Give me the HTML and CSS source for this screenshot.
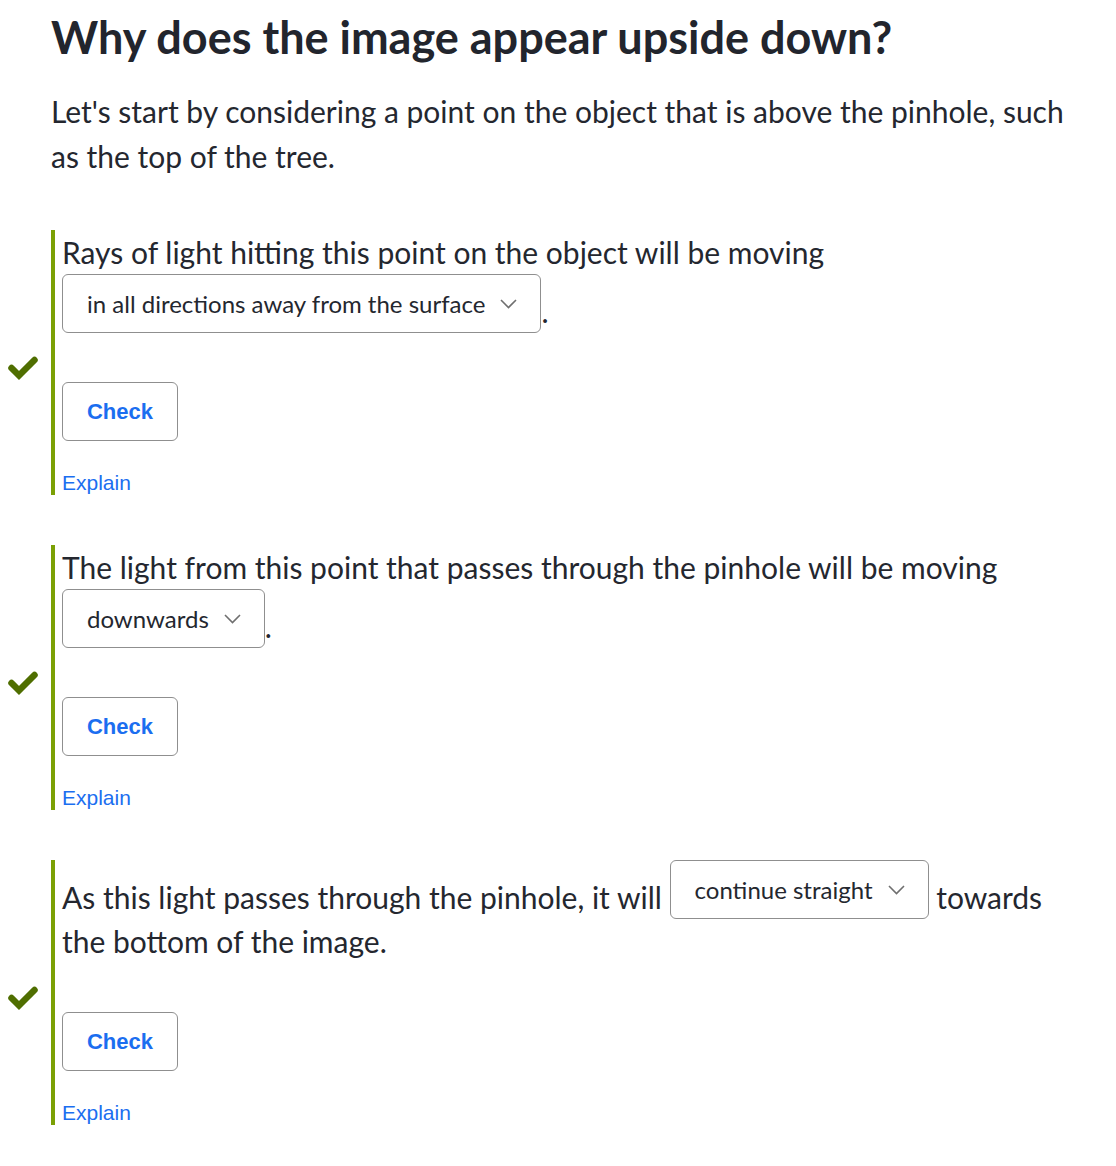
FILE: index.html
```html
<!DOCTYPE html>
<html lang="en">
<head>
<meta charset="utf-8">
<title>Why does the image appear upside down?</title>
<link rel="stylesheet" href="styles.css">
</head>
<body>
<main class="page">
  <h1 class="title">Why does the image appear upside down?</h1>
  <p class="intro">Let's start by considering a point on the object that is above the pinhole, such as the top of the tree.</p>

  <section class="question">
    <div class="mark"><svg width="30" height="26" viewBox="0 0 30 26"><polyline points="3.5,13 11,20.5 26.5,5" fill="none" stroke="#4f6e00" stroke-width="6.5" stroke-linecap="round" stroke-linejoin="miter"/></svg></div>
    <div class="qbody">
      <p class="prompt">Rays of light hitting this point on the object will be moving <span class="select">in all directions away from the surface<svg class="chev" width="17" height="10" viewBox="0 0 17 10"><polyline points="1,1 8.5,8.5 16,1" fill="none" stroke="#6f6f6f" stroke-width="1.6"/></svg></span>.</p>
      <button class="check" type="button">Check</button>
      <a class="explain" href="#">Explain</a>
    </div>
  </section>

  <section class="question">
    <div class="mark"><svg width="30" height="26" viewBox="0 0 30 26"><polyline points="3.5,13 11,20.5 26.5,5" fill="none" stroke="#4f6e00" stroke-width="6.5" stroke-linecap="round" stroke-linejoin="miter"/></svg></div>
    <div class="qbody">
      <p class="prompt">The light from this point that passes through the pinhole will be moving <span class="select">downwards<svg class="chev" width="17" height="10" viewBox="0 0 17 10"><polyline points="1,1 8.5,8.5 16,1" fill="none" stroke="#6f6f6f" stroke-width="1.6"/></svg></span>.</p>
      <button class="check" type="button">Check</button>
      <a class="explain" href="#">Explain</a>
    </div>
  </section>

  <section class="question">
    <div class="mark"><svg width="30" height="26" viewBox="0 0 30 26"><polyline points="3.5,13 11,20.5 26.5,5" fill="none" stroke="#4f6e00" stroke-width="6.5" stroke-linecap="round" stroke-linejoin="miter"/></svg></div>
    <div class="qbody">
      <p class="prompt">As this light passes through the pinhole, it will <span class="select">continue straight<svg class="chev" width="17" height="10" viewBox="0 0 17 10"><polyline points="1,1 8.5,8.5 16,1" fill="none" stroke="#6f6f6f" stroke-width="1.6"/></svg></span> towards the bottom of the image.</p>
      <button class="check" type="button">Check</button>
      <a class="explain" href="#">Explain</a>
    </div>
  </section>
</main>
</body>
</html>
```

FILE: styles.css
```css
html, body {
  margin: 0;
  padding: 0;
  background: #ffffff;
}

body {
  font-family: Lato, "Open Sans", sans-serif;
  color: #24272f;
}

.page {
  display: grid;
  grid-template-columns: 51px 1fr;
  padding: 10px 36px 40px 0;
}

.title {
  grid-column: 2;
  margin: 0 0 25px 0;
  font-size: 45px;
  line-height: 54px;
  font-weight: 700;
  color: #22252d;
}

.intro {
  grid-column: 2;
  margin: 0 0 51px 0;
  font-size: 30px;
  line-height: 45px;
}

.question {
  grid-column: 1 / -1;
  display: flex;
  margin-bottom: 50px;
}

.mark {
  width: 51px;
  flex: none;
  display: flex;
  align-items: center;
  padding: 11px 0 0 8px;
  box-sizing: border-box;
}

.mark svg {
  display: block;
}

.qbody {
  flex: 1;
  border-left: 4px solid #7ba005;
  padding-left: 7px;
  display: flex;
  flex-direction: column;
  align-items: flex-start;
}

.prompt {
  margin: 0 0 49px 0;
  font-size: 30px;
  line-height: 44px;
}

.select {
  display: inline-flex;
  align-items: center;
  vertical-align: bottom;
  height: 59px;
  box-sizing: border-box;
  border: 1px solid #8f8f8f;
  border-radius: 6px;
  padding: 0 23px 0 24px;
  font-size: 24px;
  line-height: 28px;
  color: #24272f;
  background: #ffffff;
}

.chev {
  margin-left: 15px;
  display: block;
}

.check {
  height: 59px;
  width: 116px;
  box-sizing: border-box;
  border: 1px solid #8f8f8f;
  border-radius: 6px;
  background: #ffffff;
  font-family: "Liberation Sans", Arial, sans-serif;
  font-weight: 700;
  font-size: 22px;
  color: #1b6ef0;
  padding: 0;
  margin: 0 0 30px 0;
}

.explain {
  font-family: "Liberation Sans", Arial, sans-serif;
  font-size: 21px;
  line-height: 24px;
  color: #1b6ef0;
  text-decoration: none;
}
```
